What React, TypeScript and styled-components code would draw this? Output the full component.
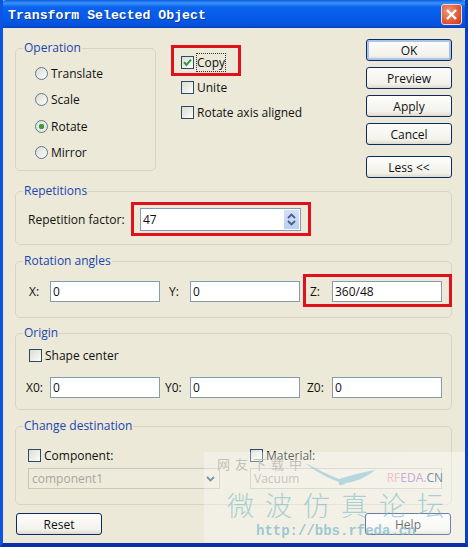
import React from "react";
import styled, { createGlobalStyle } from "styled-components";

const Global = createGlobalStyle`
  html, body { margin: 0; padding: 0; background: #ece9d8; }
  * { box-sizing: border-box; }
`;

const Dialog = styled.div`
  position: relative;
  width: 468px;
  height: 547px;
  display: flex;
  flex-direction: column;
  overflow: hidden;
  background: #ece9d8;
  color: #111;
  font: 12px "Open Sans", "Noto Sans", sans-serif;
  border-left: 3px solid #0c55e4;
  border-right: 3px solid #0a3fc0;
  border-bottom: 4px solid #0a2fa8;
`;

const TitleBar = styled.div`
  height: 28px;
  margin: 0 -3px;
  padding: 2px 6px 0 8px;
  flex: none;
  display: flex;
  align-items: center;
  justify-content: space-between;
  border-radius: 6px 6px 0 0;
  background: linear-gradient(#0a5ae0 0, #3a92f5 3px, #0a63ee 7px, #0558e6 20px, #0650d8 26px, #0a3fb8 28px);
`;

const Title = styled.span`
  font: bold 13.2px "Liberation Mono", monospace;
  color: #fff;
  text-shadow: 1px 1px 0 #0a3a9a;
`;

const CloseButton = styled.div`
  width: 21px;
  height: 21px;
  margin-top: -1px;
  display: flex;
  align-items: center;
  justify-content: center;
  border: 1px solid #f4d8d0;
  border-radius: 3px;
  background: radial-gradient(circle at 35% 35%, #f09a7c, #dc4e2a 70%, #c03a1c);
`;

const Body = styled.div`
  flex: 1;
  display: flex;
  flex-direction: column;
  padding: 13px 13px 0 12px;
`;

const TopRow = styled.div`
  height: 143px;
  display: flex;
  align-items: flex-start;
`;

const Group = styled.fieldset<{ $w?: number; $h: number; $mt?: number }>`
  margin: ${(p) => p.$mt ?? 0}px 0 0;
  padding: 0;
  min-width: 0;
  width: ${(p) => (p.$w ? `${p.$w}px` : "100%")};
  height: ${(p) => p.$h}px;
  flex: none;
  border: 1px solid #d8d4c2;
  border-radius: 5px;
`;

const Legend = styled.legend`
  margin-left: 7px;
  padding: 0 1px;
  height: 15px;
  line-height: 14px;
  color: #1c45b0;
  font-size: 12px;
`;

const RadioList = styled.div`
  display: flex;
  flex-direction: column;
  gap: 8.5px;
  padding: 8px 0 0 19px;
`;

const Option = styled.label<{ $h?: number }>`
  display: flex;
  align-items: center;
  gap: 3px;
  height: ${(p) => p.$h ?? 18}px;
  white-space: nowrap;
`;

const RadioDot = styled.span<{ $on?: boolean }>`
  width: 13px;
  height: 13px;
  flex: none;
  border: 1px solid #5d7a92;
  border-radius: 50%;
  background: ${(p) =>
    p.$on
      ? "radial-gradient(circle, #3f9a48 0 2.4px, #e8e8e0 3px, #e4e4da 100%)"
      : "linear-gradient(135deg, #dcdcd2, #fdfdfb)"};
`;

const Box = styled.span`
  width: 13px;
  height: 13px;
  flex: none;
  border: 1px solid #2a4a68;
  background: linear-gradient(135deg, #dcdcd2, #fdfdfb);
  display: flex;
  align-items: center;
  justify-content: center;
`;

const Middle = styled.div`
  margin: 12px 0 0 25px;
  width: 186px;
  display: flex;
  flex-direction: column;
  gap: 7px;
`;

const Relative = styled.div`
  position: relative;
`;

const Highlight = styled.div<{ $t: number; $l: number; $w: number; $h: number }>`
  position: absolute;
  top: ${(p) => p.$t}px;
  left: ${(p) => p.$l}px;
  width: ${(p) => p.$w}px;
  height: ${(p) => p.$h}px;
  border: 3px solid #e0101c;
  pointer-events: none;
`;

const Focus = styled.span`
  outline: 1px dotted #333;
`;

const Buttons = styled.div`
  margin: -2px 0 0 25px;
  display: flex;
  flex-direction: column;
  gap: 6px;
`;

const Button = styled.div<{ $primary?: boolean; $mt?: number }>`
  width: 86px;
  height: 22px;
  margin-top: ${(p) => p.$mt ?? 0}px;
  display: flex;
  align-items: center;
  justify-content: center;
  border: 1px solid #0b2a66;
  border-radius: 3px;
  background: linear-gradient(#fefefc, #f2f1ea 80%, #dcd8cc);
  box-shadow: ${(p) => (p.$primary ? "inset 0 0 0 2px #a9c4ea" : "none")};
  font-size: 12px;
`;

const FieldRow = styled.div<{ $pt: number; $pl?: number }>`
  display: flex;
  align-items: center;
  padding: ${(p) => p.$pt}px 0 0 ${(p) => p.$pl ?? 0}px;
`;

const FieldLabel = styled.span<{ $w: number; $pl: number }>`
  width: ${(p) => p.$w}px;
  padding-left: ${(p) => p.$pl}px;
  flex: none;
  white-space: nowrap;
`;

const Input = styled.div<{ $w: number; $h?: number }>`
  width: ${(p) => p.$w}px;
  height: ${(p) => p.$h ?? 21}px;
  flex: none;
  display: flex;
  align-items: center;
  justify-content: space-between;
  padding: 0 1px 0 2px;
  background: #fff;
  border: 1px solid #8a9aae;
  border-top-color: #7f9db9;
  font-size: 12px;
`;

const Spin = styled.div`
  width: 15px;
  height: 19px;
  display: flex;
  flex-direction: column;
  background: linear-gradient(#d4e0f4, #b8d0f2);
  align-items: center;
  justify-content: center;
  gap: 1px;
`;

const DestGrid = styled.div`
  display: grid;
  grid-template-columns: 192px 192px;
  column-gap: 30px;
  padding: 13px 0 0 12px;
  row-gap: 5px;
`;

const Select = styled.div`
  height: 21px;
  display: flex;
  align-items: center;
  justify-content: space-between;
  padding: 0 4px 0 3px;
  border: 1px solid #c9c7b8;
  background: #eeebdc;
  color: #a8a79c;
`;

const Footer = styled.div`
  margin-top: 8px;
  display: flex;
  justify-content: space-between;
  padding: 0 1px;
`;

const Watermark = styled.div`
  position: absolute;
  left: 201px;
  top: 452px;
  width: 261px;
  height: 91px;
  background: linear-gradient(90deg, rgba(255,255,255,0.3), rgba(255,255,255,0.42));
  pointer-events: none;
  overflow: hidden;
`;

const WmTop = styled.div`
  position: absolute;
  left: 13px;
  top: 2px;
  color: #c4c2b8;
  font: 13px "Noto Sans CJK SC", sans-serif;
  letter-spacing: 5px;
`;

const Bird = styled.svg`
  position: absolute;
  left: 100px;
  top: 10px;
`;

const Brand = styled.div`
  position: absolute;
  right: 22px;
  top: 17px;
  font: 12px "Open Sans", sans-serif;
  color: #c8a8dc;
  span:first-child { color: #eec0c8; }
  span:last-child { color: #6f8fa8; }
`;

const Slogan = styled.div`
  position: absolute;
  left: 23px;
  top: 33px;
  font: 27px "Noto Sans CJK SC", sans-serif;
  font-weight: 300;
  letter-spacing: 11px;
  line-height: 40px;
  color: rgba(116, 184, 200, 0.6);
  white-space: nowrap;
`;

const Url = styled.div`
  position: absolute;
  left: 52px;
  top: 71px;
  font: bold 14px "Liberation Mono", monospace;
  color: rgba(120, 180, 205, 0.7);
  white-space: nowrap;
`;

const Check = () => (
  <svg width="9" height="9" viewBox="0 0 9 9">
    <path d="M1 4.2 L3.4 7 L8 1.6" fill="none" stroke="#2f9a45" strokeWidth="2" />
  </svg>
);

const Arrow = ({ up }: { up?: boolean }) => (
  <svg width="9" height="6" viewBox="0 0 9 6">
    <path d={up ? "M1 5 L4.5 1.5 L8 5" : "M1 1 L4.5 4.5 L8 1"} fill="none" stroke="#4a5f8c" strokeWidth="1.8" />
  </svg>
);

export default function App() {
  return (
    <>
      <Global />
      <Dialog>
        <TitleBar>
          <Title>Transform Selected Object</Title>
          <CloseButton>
            <svg width="13" height="13" viewBox="0 0 13 13">
              <path d="M2 2 L11 11 M11 2 L2 11" stroke="#fff" strokeWidth="2.4" />
            </svg>
          </CloseButton>
        </TitleBar>
        <Body>
          <TopRow>
            <Group $w={141} $h={130}>
              <Legend>Operation</Legend>
              <RadioList>
                <Option><RadioDot />Translate</Option>
                <Option><RadioDot />Scale</Option>
                <Option><RadioDot $on />Rotate</Option>
                <Option><RadioDot />Mirror</Option>
              </RadioList>
            </Group>
            <Middle>
              <Relative>
                <Option><Box><Check /></Box><Focus>Copy</Focus></Option>
                <Highlight $t={-8} $l={-10} $w={70} $h={31} />
              </Relative>
              <Option><Box />Unite</Option>
              <Option><Box />Rotate axis aligned</Option>
            </Middle>
            <Buttons>
              <Button $primary>OK</Button>
              <Button>Preview</Button>
              <Button>Apply</Button>
              <Button>Cancel</Button>
              <Button $mt={5}>Less &lt;&lt;</Button>
            </Buttons>
          </TopRow>

          <Group $h={61}>
            <Legend>Repetitions</Legend>
            <FieldRow $pt={9}>
              <FieldLabel $w={124} $pl={12}>Repetition factor:</FieldLabel>
              <Relative>
                <Input $w={161} $h={23}>
                  47
                  <Spin><Arrow up /><Arrow /></Spin>
                </Input>
                <Highlight $t={-6} $l={-9} $w={180} $h={34} />
              </Relative>
            </FieldRow>
          </Group>

          <Group $h={64} $mt={9}>
            <Legend>Rotation angles</Legend>
            <FieldRow $pt={12}>
              <FieldLabel $w={34} $pl={13}>X:</FieldLabel>
              <Input $w={110}>0</Input>
              <FieldLabel $w={30} $pl={9}>Y:</FieldLabel>
              <Input $w={110}>0</Input>
              <Relative>
                <FieldRow $pt={0}>
                  <FieldLabel $w={32} $pl={10}>Z:</FieldLabel>
                  <Input $w={110}>360/48</Input>
                </FieldRow>
                <Highlight $t={-7} $l={3} $w={149} $h={33} />
              </Relative>
            </FieldRow>
          </Group>

          <Group $h={84} $mt={8}>
            <Legend>Origin</Legend>
            <FieldRow $pt={6} $pl={13}>
              <Option $h={16}><Box />Shape center</Option>
            </FieldRow>
            <FieldRow $pt={14}>
              <FieldLabel $w={34} $pl={10}>X0:</FieldLabel>
              <Input $w={110}>0</Input>
              <FieldLabel $w={30} $pl={5}>Y0:</FieldLabel>
              <Input $w={110}>0</Input>
              <FieldLabel $w={32} $pl={7}>Z0:</FieldLabel>
              <Input $w={110}>0</Input>
            </FieldRow>
          </Group>

          <Group $h={86} $mt={9}>
            <Legend>Change destination</Legend>
            <DestGrid>
              <Option $h={16}><Box />Component:</Option>
              <Option $h={16}><Box />Material:</Option>
              <Select>
                component1
                <Arrow />
              </Select>
              <Select>Vacuum</Select>
            </DestGrid>
          </Group>

          <Footer>
            <Button>Reset</Button>
            <Button>Help</Button>
          </Footer>
        </Body>
        <Watermark>
          <WmTop>网友下载中</WmTop>
          <Bird width="72" height="24" viewBox="0 0 72 24">
            <path d="M1 1 C12 6 24 13 35 17 C47 13 60 10 71 8 C62 16 50 20 42 21 C38 24 33 24 35 20 C22 15 9 8 1 1 Z" fill="#a8d4dc" opacity="0.85" />
          </Bird>
          <Brand><span>RF</span><span>EDA.</span><span>CN</span></Brand>
          <Slogan>微波仿真论坛</Slogan>
          <Url>http://bbs.rfeda.cn</Url>
        </Watermark>
      </Dialog>
    </>
  );
}
